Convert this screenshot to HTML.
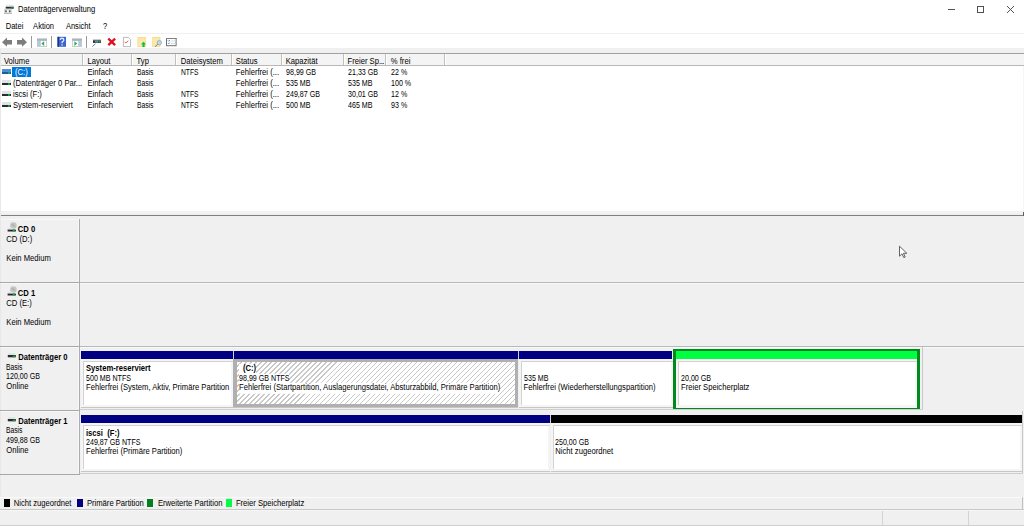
<!DOCTYPE html>
<html><head><meta charset="utf-8">
<style>
*{margin:0;padding:0;box-sizing:border-box}
html,body{width:1024px;height:526px;overflow:hidden;background:#f0f0f0;font-family:"Liberation Sans",sans-serif;color:#000;position:relative}
.a{position:absolute}
.t{position:absolute;white-space:nowrap;line-height:10px}
svg{position:absolute;overflow:visible}
</style></head><body>
<div class="a" style="left:0px;top:0px;width:1024px;height:48px;background:#fff;"></div>
<div class="a" style="left:0px;top:33px;width:1024px;height:1px;background:#f0f0f0;"></div>
<svg style="left:0;top:0" width="20" height="16" viewBox="0 0 20 16"><rect x="5.7" y="4.7" width="8" height="2.2" fill="#e4e8ec"/><rect x="5.7" y="6.8" width="8" height="1.9" fill="#2a2a38"/><rect x="10.8" y="6.8" width="2.4" height="1.9" fill="#108a30"/><rect x="4" y="8.8" width="7.9" height="4.9" fill="#d8d8d8"/><rect x="4" y="13" width="7.9" height="0.7" fill="#a8a8a8"/><rect x="5.3" y="10.4" width="1.3" height="1.7" fill="#404040"/><rect x="9.1" y="10.4" width="1.3" height="1.7" fill="#404040"/><rect x="7.2" y="10" width="1.2" height="2.4" fill="#fff"/></svg>
<div class="t" style="left:18px;top:5.35px;font-size:7.65px;color:#000;transform-origin:0 2.17px;transform:scale(1.0,1.1);">Datenträgerverwaltung</div>
<div class="a" style="left:948px;top:9px;width:7px;height:1px;background:#505050;"></div>
<svg style="left:977px;top:6px" width="7" height="7"><rect x="0.5" y="0.5" width="6" height="6" fill="none" stroke="#505050" stroke-width="1"/></svg>
<svg style="left:1007px;top:6px" width="7" height="7"><path d="M0 0L7 7M7 0L0 7" stroke="#505050" stroke-width="1"/></svg>
<div class="t" style="left:5.7px;top:21.58px;font-size:7.55px;color:#000;transform-origin:0 2.21px;transform:scale(1.0,1.1);">Datei</div>
<div class="t" style="left:33.1px;top:21.58px;font-size:7.55px;color:#000;transform-origin:0 2.21px;transform:scale(1.0,1.1);">Aktion</div>
<div class="t" style="left:65.9px;top:21.58px;font-size:7.55px;color:#000;transform-origin:0 2.21px;transform:scale(1.0,1.1);">Ansicht</div>
<div class="t" style="left:103px;top:21.58px;font-size:7.55px;color:#000;transform-origin:0 2.21px;transform:scale(1.0,1.1);">?</div>
<div class="a" style="left:31px;top:36px;width:1px;height:12px;background:#9a9a9a;"></div>
<div class="a" style="left:51px;top:36px;width:1px;height:12px;background:#9a9a9a;"></div>
<div class="a" style="left:86px;top:36px;width:1px;height:12px;background:#9a9a9a;"></div>
<svg style="left:0;top:34px" width="200" height="14" viewBox="0 34 200 14"><path d="M2 42.2L7 37.6V40H12V44.4H7V46.8Z" fill="#7d7d7d"/><path d="M27 42.2L22 37.6V40H17V44.4H22V46.8Z" fill="#7d7d7d"/><rect x="37" y="38.6" width="10" height="8.3" fill="#c4c8cc"/><rect x="37" y="38.6" width="10" height="2" fill="#aab4be"/><rect x="38" y="41" width="2.2" height="5" fill="#a8cce8"/><rect x="40.8" y="41" width="5.4" height="5" fill="#fff"/><path d="M41.4 43.6L44.2 41.2V46Z" fill="#22b24c"/><rect x="57.5" y="36.8" width="8.5" height="10" fill="#3a64d0"/><rect x="57.5" y="36.8" width="1.5" height="10" fill="#1d3580"/><path d="M60.2 39.8Q60.4 38.2 62 38.2Q63.8 38.2 63.8 39.9Q63.8 41 62.6 41.7Q62 42.1 62 43.2" fill="none" stroke="#dce8ff" stroke-width="1.4"/><rect x="61.4" y="44.3" width="1.3" height="1.3" fill="#e8f0ff"/><rect x="72" y="38.6" width="10" height="8.3" fill="#c4c8cc"/><rect x="72" y="38.6" width="10" height="2" fill="#aab4be"/><rect x="72.8" y="41" width="5.4" height="5" fill="#fff"/><rect x="78.8" y="41" width="2.2" height="5" fill="#a8cce8"/><path d="M77.2 43.6L74.4 41.2V46Z" fill="#22b24c"/><rect x="93" y="39.3" width="8" height="1" fill="#b8b8b8"/><rect x="93" y="40.3" width="8" height="2.6" fill="#2e2e2e"/><rect x="95" y="40.6" width="3" height="2" fill="#5a8cc0"/><rect x="98.5" y="40.8" width="2" height="1.6" fill="#20b040"/><path d="M92.3 46.6L95.5 43.6" stroke="#6a7890" stroke-width="0.9"/><path d="M108.3 38.6L115.1 45.2M115.1 38.6L108.3 45.2" stroke="#e01020" stroke-width="2.3"/><path d="M123.4 37.4H128.5L130.5 39.4V46.6H123.4Z" fill="#fff" stroke="#a8a8a8" stroke-width="0.8"/><path d="M124.6 41.8L125.8 43L128.4 40.8" fill="none" stroke="#e85030" stroke-width="0.9"/><rect x="137.4" y="37" width="8.4" height="9.9" fill="#f6dc8c"/><rect x="138.3" y="38" width="6.5" height="8" fill="#fbe8ac"/><path d="M143.5 41.8L146 44.3H144.6V46.9H142.4V44.3H141Z" fill="#10c040"/><rect x="152.2" y="37" width="8.2" height="9.9" fill="#f6dc8c"/><rect x="153.1" y="38" width="6.3" height="8" fill="#fbe8ac"/><circle cx="159.4" cy="42.6" r="2.2" fill="#bcd8f0" stroke="#8aa0b8" stroke-width="0.7"/><path d="M155 46.7L157.8 44.2" stroke="#7a6a70" stroke-width="0.9"/><rect x="166.5" y="38.5" width="9.6" height="7.2" fill="#fff" stroke="#707070" stroke-width="1"/><rect x="166" y="38" width="10.6" height="1" fill="#808080"/><path d="M168 40.6L168.7 41.3L169.8 40M168 43.2L168.7 43.9L169.8 42.6" fill="none" stroke="#3a7ad8" stroke-width="0.9"/><path d="M171 41H175M171 43.6H175" stroke="#c8c8c8" stroke-width="0.7"/></svg>
<div class="a" style="left:0px;top:53px;width:1024px;height:1px;background:#a0a0a0;"></div>
<div class="a" style="left:1px;top:54px;width:1023px;height:11px;background:#f4f4f4;"></div>
<div class="a" style="left:1px;top:65px;width:1023px;height:1px;background:#b8b8b8;"></div>
<div class="a" style="left:82px;top:54px;width:1px;height:11px;background:#c0c0c0;"></div>
<div class="a" style="left:83px;top:54px;width:1px;height:11px;background:#fff;"></div>
<div class="a" style="left:131px;top:54px;width:1px;height:11px;background:#c0c0c0;"></div>
<div class="a" style="left:132px;top:54px;width:1px;height:11px;background:#fff;"></div>
<div class="a" style="left:175px;top:54px;width:1px;height:11px;background:#c0c0c0;"></div>
<div class="a" style="left:176px;top:54px;width:1px;height:11px;background:#fff;"></div>
<div class="a" style="left:231px;top:54px;width:1px;height:11px;background:#c0c0c0;"></div>
<div class="a" style="left:232px;top:54px;width:1px;height:11px;background:#fff;"></div>
<div class="a" style="left:281px;top:54px;width:1px;height:11px;background:#c0c0c0;"></div>
<div class="a" style="left:282px;top:54px;width:1px;height:11px;background:#fff;"></div>
<div class="a" style="left:343px;top:54px;width:1px;height:11px;background:#c0c0c0;"></div>
<div class="a" style="left:344px;top:54px;width:1px;height:11px;background:#fff;"></div>
<div class="a" style="left:385px;top:54px;width:1px;height:11px;background:#c0c0c0;"></div>
<div class="a" style="left:386px;top:54px;width:1px;height:11px;background:#fff;"></div>
<div class="a" style="left:444px;top:54px;width:1px;height:11px;background:#c0c0c0;"></div>
<div class="a" style="left:445px;top:54px;width:1px;height:11px;background:#fff;"></div>
<div class="t" style="left:3.9px;top:56.75px;font-size:7.65px;color:#000;transform-origin:0 2.17px;transform:scale(1.0,1.1);">Volume</div>
<div class="t" style="left:87.5px;top:56.75px;font-size:7.65px;color:#000;transform-origin:0 2.17px;transform:scale(1.0,1.1);">Layout</div>
<div class="t" style="left:136.6px;top:56.75px;font-size:7.65px;color:#000;transform-origin:0 2.17px;transform:scale(1.0,1.1);">Typ</div>
<div class="t" style="left:180.8px;top:56.75px;font-size:7.65px;color:#000;transform-origin:0 2.17px;transform:scale(1.0,1.1);">Dateisystem</div>
<div class="t" style="left:235.8px;top:56.75px;font-size:7.65px;color:#000;transform-origin:0 2.17px;transform:scale(1.0,1.1);">Status</div>
<div class="t" style="left:285.7px;top:56.75px;font-size:7.65px;color:#000;transform-origin:0 2.17px;transform:scale(1.0,1.1);">Kapazität</div>
<div class="t" style="left:347.5px;top:56.75px;font-size:7.65px;color:#000;transform-origin:0 2.17px;transform:scale(1.0,1.1);">Freier Sp<span style="letter-spacing:-0.4px">...</span></div>
<div class="t" style="left:390.8px;top:56.75px;font-size:7.65px;color:#000;transform-origin:0 2.17px;transform:scale(1.0,1.1);">% frei</div>
<div class="a" style="left:1px;top:66px;width:1023px;height:145px;background:#fff;"></div>
<div class="a" style="left:1023px;top:66px;width:1px;height:145px;background:#f6f6f6;"></div>
<div class="a" style="left:2px;top:69px;width:9px;height:3px;background:#4a90d8;"></div>
<div class="a" style="left:2px;top:72px;width:9px;height:2px;background:#1e5c9c;"></div>
<div class="a" style="left:7.5px;top:72px;width:2.5px;height:2px;background:#10a080;"></div>
<div class="a" style="left:12px;top:67px;width:19px;height:10px;background:#0078d7;"></div>
<div class="t" style="left:15px;top:67.75px;font-size:7.65px;color:#fff;transform-origin:0 2.17px;transform:scale(1.0,1.1);">(C:)</div>
<div class="t" style="left:87.5px;top:67.75px;font-size:7.65px;color:#000;transform-origin:0 2.17px;transform:scale(1.0,1.1);">Einfach</div>
<div class="t" style="left:136.6px;top:67.75px;font-size:7.65px;color:#000;transform-origin:0 2.17px;transform:scale(0.88,1.1);">Basis</div>
<div class="t" style="left:180.8px;top:67.75px;font-size:7.65px;color:#000;transform-origin:0 2.17px;transform:scale(0.88,1.1);">NTFS</div>
<div class="t" style="left:235.8px;top:67.75px;font-size:7.65px;color:#000;transform-origin:0 2.17px;transform:scale(1.0,1.1);">Fehlerfrei (...</div>
<div class="t" style="left:285.7px;top:67.75px;font-size:7.65px;color:#000;transform-origin:0 2.17px;transform:scale(0.93,1.1);">98,99 GB</div>
<div class="t" style="left:347.5px;top:67.75px;font-size:7.65px;color:#000;transform-origin:0 2.17px;transform:scale(0.93,1.1);">21,33 GB</div>
<div class="t" style="left:390.8px;top:67.75px;font-size:7.65px;color:#000;transform-origin:0 2.17px;transform:scale(0.93,1.1);">22 %</div>
<div class="a" style="left:2px;top:80px;width:9px;height:3px;background:#dde2e8;"></div>
<div class="a" style="left:2px;top:83px;width:9px;height:2px;background:#2a2a30;"></div>
<div class="a" style="left:7.5px;top:83px;width:2.5px;height:2px;background:#10a030;"></div>
<div class="t" style="left:13px;top:78.75px;font-size:7.65px;color:#000;transform-origin:0 2.17px;transform:scale(1.0,1.1);">(Datenträger 0 Par...</div>
<div class="t" style="left:87.5px;top:78.75px;font-size:7.65px;color:#000;transform-origin:0 2.17px;transform:scale(1.0,1.1);">Einfach</div>
<div class="t" style="left:136.6px;top:78.75px;font-size:7.65px;color:#000;transform-origin:0 2.17px;transform:scale(0.88,1.1);">Basis</div>
<div class="t" style="left:235.8px;top:78.75px;font-size:7.65px;color:#000;transform-origin:0 2.17px;transform:scale(1.0,1.1);">Fehlerfrei (...</div>
<div class="t" style="left:285.7px;top:78.75px;font-size:7.65px;color:#000;transform-origin:0 2.17px;transform:scale(0.93,1.1);">535 MB</div>
<div class="t" style="left:347.5px;top:78.75px;font-size:7.65px;color:#000;transform-origin:0 2.17px;transform:scale(0.93,1.1);">535 MB</div>
<div class="t" style="left:390.8px;top:78.75px;font-size:7.65px;color:#000;transform-origin:0 2.17px;transform:scale(0.93,1.1);">100 %</div>
<div class="a" style="left:2px;top:91px;width:9px;height:3px;background:#dde2e8;"></div>
<div class="a" style="left:2px;top:94px;width:9px;height:2px;background:#2a2a30;"></div>
<div class="a" style="left:7.5px;top:94px;width:2.5px;height:2px;background:#10a030;"></div>
<div class="t" style="left:13px;top:89.75px;font-size:7.65px;color:#000;transform-origin:0 2.17px;transform:scale(1.0,1.1);">iscsi (F:)</div>
<div class="t" style="left:87.5px;top:89.75px;font-size:7.65px;color:#000;transform-origin:0 2.17px;transform:scale(1.0,1.1);">Einfach</div>
<div class="t" style="left:136.6px;top:89.75px;font-size:7.65px;color:#000;transform-origin:0 2.17px;transform:scale(0.88,1.1);">Basis</div>
<div class="t" style="left:180.8px;top:89.75px;font-size:7.65px;color:#000;transform-origin:0 2.17px;transform:scale(0.88,1.1);">NTFS</div>
<div class="t" style="left:235.8px;top:89.75px;font-size:7.65px;color:#000;transform-origin:0 2.17px;transform:scale(1.0,1.1);">Fehlerfrei (...</div>
<div class="t" style="left:285.7px;top:89.75px;font-size:7.65px;color:#000;transform-origin:0 2.17px;transform:scale(0.93,1.1);">249,87 GB</div>
<div class="t" style="left:347.5px;top:89.75px;font-size:7.65px;color:#000;transform-origin:0 2.17px;transform:scale(0.93,1.1);">30,01 GB</div>
<div class="t" style="left:390.8px;top:89.75px;font-size:7.65px;color:#000;transform-origin:0 2.17px;transform:scale(0.93,1.1);">12 %</div>
<div class="a" style="left:2px;top:102px;width:9px;height:3px;background:#dde2e8;"></div>
<div class="a" style="left:2px;top:105px;width:9px;height:2px;background:#2a2a30;"></div>
<div class="a" style="left:7.5px;top:105px;width:2.5px;height:2px;background:#10a030;"></div>
<div class="t" style="left:13px;top:100.75px;font-size:7.65px;color:#000;transform-origin:0 2.17px;transform:scale(1.0,1.1);">System-reserviert</div>
<div class="t" style="left:87.5px;top:100.75px;font-size:7.65px;color:#000;transform-origin:0 2.17px;transform:scale(1.0,1.1);">Einfach</div>
<div class="t" style="left:136.6px;top:100.75px;font-size:7.65px;color:#000;transform-origin:0 2.17px;transform:scale(0.88,1.1);">Basis</div>
<div class="t" style="left:180.8px;top:100.75px;font-size:7.65px;color:#000;transform-origin:0 2.17px;transform:scale(0.88,1.1);">NTFS</div>
<div class="t" style="left:235.8px;top:100.75px;font-size:7.65px;color:#000;transform-origin:0 2.17px;transform:scale(1.0,1.1);">Fehlerfrei (...</div>
<div class="t" style="left:285.7px;top:100.75px;font-size:7.65px;color:#000;transform-origin:0 2.17px;transform:scale(0.93,1.1);">500 MB</div>
<div class="t" style="left:347.5px;top:100.75px;font-size:7.65px;color:#000;transform-origin:0 2.17px;transform:scale(0.93,1.1);">465 MB</div>
<div class="t" style="left:390.8px;top:100.75px;font-size:7.65px;color:#000;transform-origin:0 2.17px;transform:scale(0.93,1.1);">93 %</div>
<div class="a" style="left:1px;top:211px;width:1023px;height:4px;background:#f0f0f0;"></div>
<div class="a" style="left:1px;top:212px;width:1023px;height:1px;background:#f6f6f6;"></div>
<div class="a" style="left:0px;top:215px;width:1024px;height:1px;background:#808080;"></div>
<div class="a" style="left:1023px;top:212px;width:1px;height:4px;background:#606060;"></div>
<div class="a" style="left:80px;top:219px;width:944px;height:1px;background:#f6f6f6;"></div>
<div class="a" style="left:0px;top:216px;width:1024px;height:293px;background:#f0f0f0;"></div>
<div class="a" style="left:0px;top:49px;width:1px;height:448px;background:#e8e8e8;"></div>
<div class="a" style="left:1px;top:219px;width:78px;height:1px;background:#f8f8f8;"></div>
<div class="a" style="left:78px;top:219px;width:1px;height:63px;background:#f8f8f8;"></div>
<div class="a" style="left:79px;top:219px;width:1px;height:64px;background:#acacac;"></div>
<div class="a" style="left:0px;top:282px;width:80px;height:1px;background:#a8a8a8;"></div>
<div class="a" style="left:1px;top:283px;width:78px;height:1px;background:#f8f8f8;"></div>
<div class="a" style="left:78px;top:283px;width:1px;height:63px;background:#f8f8f8;"></div>
<div class="a" style="left:79px;top:283px;width:1px;height:64px;background:#acacac;"></div>
<div class="a" style="left:0px;top:346px;width:80px;height:1px;background:#a8a8a8;"></div>
<div class="a" style="left:1px;top:347px;width:78px;height:1px;background:#f8f8f8;"></div>
<div class="a" style="left:78px;top:347px;width:1px;height:63px;background:#f8f8f8;"></div>
<div class="a" style="left:79px;top:347px;width:1px;height:64px;background:#acacac;"></div>
<div class="a" style="left:0px;top:410px;width:80px;height:1px;background:#a8a8a8;"></div>
<div class="a" style="left:1px;top:411px;width:78px;height:1px;background:#f8f8f8;"></div>
<div class="a" style="left:78px;top:411px;width:1px;height:63px;background:#f8f8f8;"></div>
<div class="a" style="left:79px;top:411px;width:1px;height:64px;background:#acacac;"></div>
<div class="a" style="left:0px;top:474px;width:80px;height:1px;background:#a8a8a8;"></div>
<div class="a" style="left:80px;top:282px;width:944px;height:1px;background:#b8b8b8;"></div>
<div class="a" style="left:80px;top:283px;width:944px;height:1px;background:#f8f8f8;"></div>
<div class="a" style="left:80px;top:346px;width:944px;height:1px;background:#b8b8b8;"></div>
<div class="a" style="left:80px;top:347px;width:944px;height:1px;background:#f8f8f8;"></div>
<div class="a" style="left:922px;top:347px;width:1px;height:63px;background:#c8c8c8;"></div>
<div class="a" style="left:80px;top:409px;width:843px;height:1px;background:#cfcfcf;"></div>
<div class="a" style="left:1022px;top:411px;width:1px;height:63px;background:#c8c8c8;"></div>
<div class="a" style="left:80px;top:473px;width:943px;height:1px;background:#cfcfcf;"></div>
<svg style="left:7px;top:222px" width="12" height="12" viewBox="0 0 12 12"><circle cx="6.4" cy="3.5" r="3.3" fill="#c4c4c4"/><path d="M5.2 2.3L7.6 4.4" stroke="#8a8a8a" stroke-width="0.7"/><rect x="0.6" y="5.8" width="5" height="1.8" fill="#dde4ea"/><rect x="0.6" y="7.6" width="8.3" height="1.9" fill="#2a2a30"/><rect x="5.8" y="7.6" width="2.2" height="1.9" fill="#10a030"/></svg>
<div class="t" style="left:17.8px;top:224.65px;font-size:7.65px;font-weight:bold;color:#000;transform-origin:0 2.17px;transform:scale(1.0,1.1);">CD 0</div>
<div class="t" style="left:6.3px;top:234.55px;font-size:7.65px;color:#000;transform-origin:0 2.17px;transform:scale(1.0,1.1);">CD (D:)</div>
<div class="t" style="left:6.3px;top:253.95px;font-size:7.65px;color:#000;transform-origin:0 2.17px;transform:scale(1.0,1.1);">Kein Medium</div>
<svg style="left:7px;top:286px" width="12" height="12" viewBox="0 0 12 12"><circle cx="6.4" cy="3.5" r="3.3" fill="#c4c4c4"/><path d="M5.2 2.3L7.6 4.4" stroke="#8a8a8a" stroke-width="0.7"/><rect x="0.6" y="5.8" width="5" height="1.8" fill="#dde4ea"/><rect x="0.6" y="7.6" width="8.3" height="1.9" fill="#2a2a30"/><rect x="5.8" y="7.6" width="2.2" height="1.9" fill="#10a030"/></svg>
<div class="t" style="left:17.8px;top:288.65px;font-size:7.65px;font-weight:bold;color:#000;transform-origin:0 2.17px;transform:scale(1.0,1.1);">CD 1</div>
<div class="t" style="left:6.3px;top:298.55px;font-size:7.65px;color:#000;transform-origin:0 2.17px;transform:scale(1.0,1.1);">CD (E:)</div>
<div class="t" style="left:6.3px;top:317.95px;font-size:7.65px;color:#000;transform-origin:0 2.17px;transform:scale(1.0,1.1);">Kein Medium</div>
<svg style="left:7px;top:353px" width="10" height="6" viewBox="0 0 10 6"><rect x="0.9" y="0.2" width="7.3" height="1.8" fill="#dfe4ea"/><rect x="0.8" y="2" width="8" height="2.3" fill="#2a2a30"/><rect x="5.8" y="2.5" width="2.2" height="1.8" fill="#10a030"/></svg>
<div class="t" style="left:18.3px;top:352.95px;font-size:7.65px;font-weight:bold;color:#000;transform-origin:0 2.17px;transform:scale(1.0,1.1);">Datenträger 0</div>
<div class="t" style="left:6.3px;top:362.85px;font-size:7.65px;color:#000;transform-origin:0 2.17px;transform:scale(0.88,1.1);">Basis</div>
<div class="t" style="left:6.3px;top:372.35px;font-size:7.65px;color:#000;transform-origin:0 2.17px;transform:scale(0.93,1.1);">120,00 GB</div>
<div class="t" style="left:6.3px;top:381.85px;font-size:7.65px;color:#000;transform-origin:0 2.17px;transform:scale(1.0,1.1);">Online</div>
<svg style="left:7px;top:417px" width="10" height="6" viewBox="0 0 10 6"><rect x="0.9" y="0.2" width="7.3" height="1.8" fill="#dfe4ea"/><rect x="0.8" y="2" width="8" height="2.3" fill="#2a2a30"/><rect x="5.8" y="2.5" width="2.2" height="1.8" fill="#10a030"/></svg>
<div class="t" style="left:18.3px;top:416.95px;font-size:7.65px;font-weight:bold;color:#000;transform-origin:0 2.17px;transform:scale(1.0,1.1);">Datenträger 1</div>
<div class="t" style="left:6.3px;top:426.35px;font-size:7.65px;color:#000;transform-origin:0 2.17px;transform:scale(0.88,1.1);">Basis</div>
<div class="t" style="left:6.3px;top:436.25px;font-size:7.65px;color:#000;transform-origin:0 2.17px;transform:scale(0.93,1.1);">499,88 GB</div>
<div class="t" style="left:6.3px;top:445.85px;font-size:7.65px;color:#000;transform-origin:0 2.17px;transform:scale(1.0,1.1);">Online</div>
<div class="a" style="left:81px;top:351px;width:152px;height:8px;background:#000080;"></div>
<div class="a" style="left:81px;top:359px;width:152px;height:48px;background:#f5f5f5;"></div>
<div class="a" style="left:83px;top:361px;width:150px;height:1px;background:#d2d2d2;"></div>
<div class="a" style="left:83px;top:361px;width:1px;height:44px;background:#d2d2d2;"></div>
<div class="a" style="left:84px;top:362px;width:147px;height:43px;background:#fff;"></div>
<div class="a" style="left:81px;top:407px;width:152px;height:1px;background:#c6c6c6;"></div>
<div class="t" style="left:86px;top:364.45px;font-size:7.65px;font-weight:bold;color:#000;transform-origin:0 2.17px;transform:scale(1.0,1.1);">System-reserviert</div>
<div class="t" style="left:86px;top:374.35px;font-size:7.65px;color:#000;transform-origin:0 2.17px;transform:scale(0.93,1.1);">500 MB NTFS</div>
<div class="t" style="left:86px;top:383.45px;font-size:7.65px;color:#000;transform-origin:0 2.17px;transform:scale(1.0,1.1);">Fehlerfrei (System, Aktiv, Primäre Partition</div>
<div class="a" style="left:234px;top:351px;width:284px;height:8px;background:#000080;"></div>
<div class="a" style="left:233px;top:359px;width:285px;height:48px;background:#f5f5f5;"></div>
<div class="a" style="left:233px;top:407px;width:285px;height:1px;background:#c6c6c6;"></div>
<div class="a" style="left:233px;top:359px;width:285px;height:48px;background:transparent;border-left:4px solid #b0b0b0;border-top:3px solid #b0b0b0;border-right:3px solid #b0b0b0;border-bottom:3px solid #b0b0b0"></div>
<div class="a" style="left:237px;top:362px;width:278px;height:42px;background:repeating-linear-gradient(135deg,#fff 0 2.74px,#c8c8c8 2.74px 3.54px);"></div>
<div class="t" style="left:239px;top:364.45px;font-size:7.65px;font-weight:bold;color:#000;transform-origin:0 2.17px;transform:scale(1.0,1.1);background:#fff;"><span style="padding-left:4px">(C:)</span></div>
<div class="t" style="left:239px;top:374.35px;font-size:7.65px;color:#000;transform-origin:0 2.17px;transform:scale(0.93,1.1);background:#fff;">98,99 GB NTFS</div>
<div class="t" style="left:239px;top:383.45px;font-size:7.65px;color:#000;transform-origin:0 2.17px;transform:scale(1.0,1.1);background:#fff;">Fehlerfrei (Startpartition, Auslagerungsdatei, Absturzabbild, Primäre Partition)</div>
<div class="a" style="left:519px;top:351px;width:153px;height:8px;background:#000080;"></div>
<div class="a" style="left:519px;top:359px;width:154px;height:48px;background:#f5f5f5;"></div>
<div class="a" style="left:521px;top:361px;width:152px;height:1px;background:#d2d2d2;"></div>
<div class="a" style="left:521px;top:361px;width:1px;height:44px;background:#d2d2d2;"></div>
<div class="a" style="left:522px;top:362px;width:149px;height:43px;background:#fff;"></div>
<div class="a" style="left:519px;top:407px;width:154px;height:1px;background:#c6c6c6;"></div>
<div class="t" style="left:523.6px;top:374.35px;font-size:7.65px;color:#000;transform-origin:0 2.17px;transform:scale(0.93,1.1);">535 MB</div>
<div class="t" style="left:523.6px;top:383.45px;font-size:7.65px;color:#000;transform-origin:0 2.17px;transform:scale(1.0,1.1);">Fehlerfrei (Wiederherstellungspartition)</div>
<div class="a" style="left:673px;top:349px;width:247px;height:60px;background:transparent;border-left:3px solid #008a1e;border-right:3px solid #008a1e;border-top:2px solid #008a1e;border-bottom:2px solid #008a1e"></div>
<div class="a" style="left:676px;top:351px;width:241px;height:8px;background:#00ff40;"></div>
<div class="a" style="left:676px;top:359px;width:241px;height:48px;background:#f5f5f5;"></div>
<div class="a" style="left:678px;top:361px;width:239px;height:1px;background:#d2d2d2;"></div>
<div class="a" style="left:678px;top:361px;width:1px;height:44px;background:#d2d2d2;"></div>
<div class="a" style="left:679px;top:362px;width:236px;height:43px;background:#fff;"></div>
<div class="a" style="left:676px;top:407px;width:241px;height:1px;background:#c6c6c6;"></div>
<div class="t" style="left:681px;top:374.35px;font-size:7.65px;color:#000;transform-origin:0 2.17px;transform:scale(0.93,1.1);">20,00 GB</div>
<div class="t" style="left:681px;top:383.45px;font-size:7.65px;color:#000;transform-origin:0 2.17px;transform:scale(1.0,1.1);">Freier Speicherplatz</div>
<div class="a" style="left:676px;top:407px;width:241px;height:1px;background:#f5f5f5;"></div>
<div class="a" style="left:81px;top:415px;width:469px;height:8px;background:#000080;"></div>
<div class="a" style="left:81px;top:423px;width:469px;height:48px;background:#f5f5f5;"></div>
<div class="a" style="left:83px;top:425px;width:467px;height:1px;background:#d2d2d2;"></div>
<div class="a" style="left:83px;top:425px;width:1px;height:44px;background:#d2d2d2;"></div>
<div class="a" style="left:84px;top:426px;width:464px;height:43px;background:#fff;"></div>
<div class="a" style="left:81px;top:471px;width:469px;height:1px;background:#c6c6c6;"></div>
<div class="t" style="left:86px;top:428.65px;font-size:7.65px;font-weight:bold;color:#000;transform-origin:0 2.17px;transform:scale(1.0,1.1);">iscsi&nbsp;&nbsp;(F:)</div>
<div class="t" style="left:86px;top:437.95px;font-size:7.65px;color:#000;transform-origin:0 2.17px;transform:scale(0.93,1.1);">249,87 GB NTFS</div>
<div class="t" style="left:86px;top:447.45px;font-size:7.65px;color:#000;transform-origin:0 2.17px;transform:scale(1.0,1.1);">Fehlerfrei (Primäre Partition)</div>
<div class="a" style="left:550px;top:415px;width:1px;height:8px;background:#d0d0d0;"></div>
<div class="a" style="left:551px;top:415px;width:471px;height:8px;background:#000000;"></div>
<div class="a" style="left:551px;top:423px;width:471px;height:48px;background:#f5f5f5;"></div>
<div class="a" style="left:553px;top:425px;width:469px;height:1px;background:#d2d2d2;"></div>
<div class="a" style="left:553px;top:425px;width:1px;height:44px;background:#d2d2d2;"></div>
<div class="a" style="left:554px;top:426px;width:466px;height:43px;background:#fff;"></div>
<div class="a" style="left:551px;top:471px;width:471px;height:1px;background:#c6c6c6;"></div>
<div class="t" style="left:555.3px;top:437.95px;font-size:7.65px;color:#000;transform-origin:0 2.17px;transform:scale(0.93,1.1);">250,00 GB</div>
<div class="t" style="left:555.3px;top:447.45px;font-size:7.65px;color:#000;transform-origin:0 2.17px;transform:scale(1.0,1.1);">Nicht zugeordnet</div>
<div class="a" style="left:233px;top:351px;width:1px;height:8px;background:#d0d0d0;"></div>
<div class="a" style="left:518px;top:351px;width:1px;height:8px;background:#d0d0d0;"></div>
<div class="a" style="left:0px;top:497px;width:1024px;height:1px;background:#fafafa;"></div>
<div class="a" style="left:4px;top:499px;width:6px;height:8px;background:#000;"></div>
<div class="t" style="left:13.7px;top:498.85px;font-size:7.65px;color:#000;transform-origin:0 2.17px;transform:scale(1.0,1.1);">Nicht zugeordnet</div>
<div class="a" style="left:77px;top:499px;width:6px;height:8px;background:#000080;"></div>
<div class="t" style="left:86.9px;top:498.85px;font-size:7.65px;color:#000;transform-origin:0 2.17px;transform:scale(1.0,1.1);">Primäre Partition</div>
<div class="a" style="left:147px;top:499px;width:6px;height:8px;background:#008020;"></div>
<div class="t" style="left:157.9px;top:498.85px;font-size:7.65px;color:#000;transform-origin:0 2.17px;transform:scale(1.0,1.1);">Erweiterte Partition</div>
<div class="a" style="left:226px;top:499px;width:6px;height:8px;background:#00ff40;"></div>
<div class="t" style="left:235.9px;top:498.85px;font-size:7.65px;color:#000;transform-origin:0 2.17px;transform:scale(1.0,1.1);">Freier Speicherplatz</div>
<div class="a" style="left:0px;top:509px;width:1024px;height:1px;background:#c8c8c8;"></div>
<div class="a" style="left:882px;top:511px;width:1px;height:14px;background:#d4d4d4;"></div>
<div class="a" style="left:968px;top:511px;width:1px;height:14px;background:#d4d4d4;"></div>
<div class="a" style="left:1022px;top:497px;width:1px;height:12px;background:#c0c0c0;"></div>
<div class="a" style="left:0px;top:510px;width:1024px;height:1px;background:#f6f6f6;"></div>
<div class="a" style="left:0px;top:525px;width:1024px;height:1px;background:#d0d0d0;"></div>
<svg style="left:898px;top:245px" width="12" height="14" viewBox="0 0 12 14"><path d="M1.5 1.2V11.2L4 8.8L5.8 12.6L7.2 12L5.4 8.3H8.8Z" fill="#fff" stroke="#505050" stroke-width="0.9" stroke-linejoin="round"/></svg>
</body></html>
